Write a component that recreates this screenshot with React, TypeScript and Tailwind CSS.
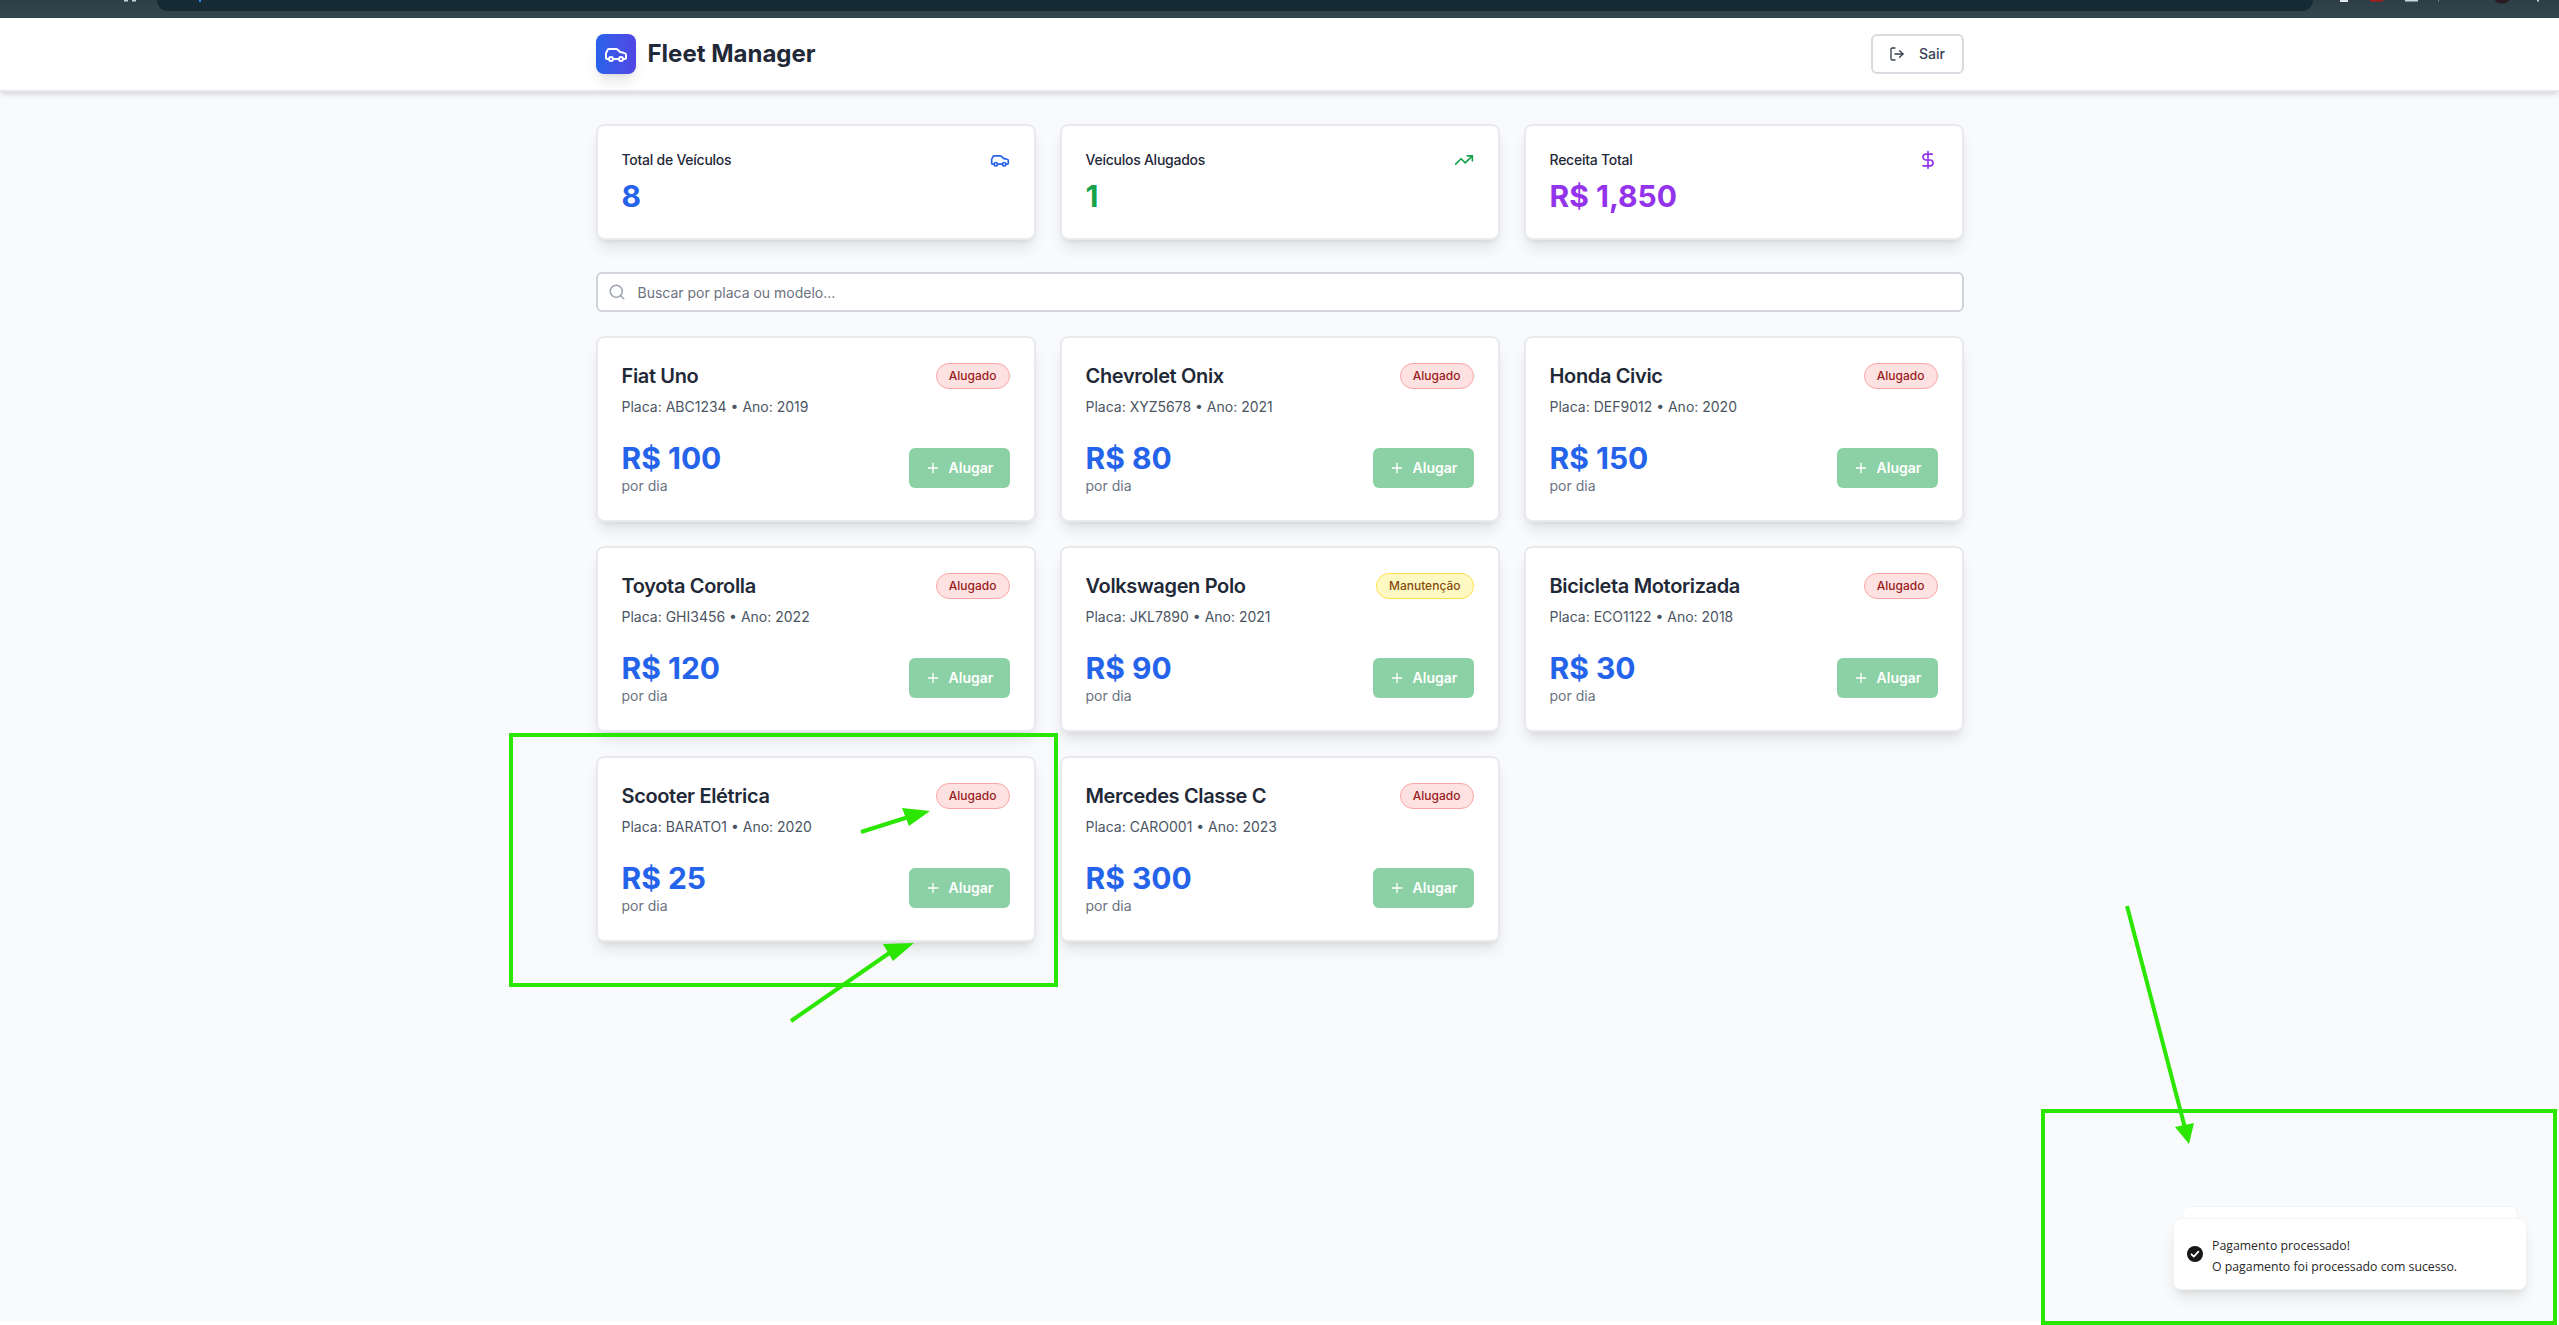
import React from 'react'
import { Car, TrendingUp, DollarSign, LogOut, Search, Plus } from 'lucide-react'

interface Vehicle {
	name: string
	plate: string
	year: number
	price: number
	status: string
}

const vehicles: Vehicle[] = [
	{ name: 'Fiat Uno', plate: 'ABC1234', year: 2019, price: 100, status: 'Alugado' },
	{ name: 'Chevrolet Onix', plate: 'XYZ5678', year: 2021, price: 80, status: 'Alugado' },
	{ name: 'Honda Civic', plate: 'DEF9012', year: 2020, price: 150, status: 'Alugado' },
	{ name: 'Toyota Corolla', plate: 'GHI3456', year: 2022, price: 120, status: 'Alugado' },
	{ name: 'Volkswagen Polo', plate: 'JKL7890', year: 2021, price: 90, status: 'Manutenção' },
	{ name: 'Bicicleta Motorizada', plate: 'ECO1122', year: 2018, price: 30, status: 'Alugado' },
	{ name: 'Scooter Elétrica', plate: 'BARATO1', year: 2020, price: 25, status: 'Alugado' },
	{ name: 'Mercedes Classe C', plate: 'CARO001', year: 2023, price: 300, status: 'Alugado' },
]

const StatCard = ({ label, value, color, icon }: { label: string; value: string; color: string; icon: React.ReactNode }) => (
	<div className="h-[116px] rounded-lg border-2 border-[#e9eaee] bg-white px-6 pt-6 shadow-lg">
		<div className="flex items-center justify-between">
			<span className="text-sm font-medium tracking-[-0.25px] text-[#1f2937]">{label}</span>
			{icon}
		</div>
		<div className={`mt-2 text-3xl font-bold ${color}`}>{value}</div>
	</div>
)

const VehicleCard = ({ vehicle }: { vehicle: Vehicle }) => (
	<div className="rounded-lg border-2 border-[#e9eaee] bg-white p-6 shadow-lg">
		<div className="flex items-center justify-between">
			<h3 className="text-xl font-semibold tracking-[-0.35px] text-[#1f2937]">{vehicle.name}</h3>
			{vehicle.status === 'Alugado' ? (
				<span className="rounded-full border border-[#fca5a5] bg-[#fee2e2] px-3 py-1 text-xs font-medium text-[#991b1b]">{vehicle.status}</span>
			) : (
				<span className="rounded-full border border-[#fde047] bg-[#fef9c3] px-3 py-1 text-xs font-medium text-[#854d0e]">{vehicle.status}</span>
			)}
		</div>
		<p className="mt-[7px] text-sm text-[#4b5563]">
			Placa: {vehicle.plate} • Ano: {vehicle.year}
		</p>
		<div className="mt-[23px] flex items-center justify-between">
			<div>
				<div className="text-3xl font-bold text-[#2563eb]">R$ {vehicle.price}</div>
				<div className="text-sm text-[#6b7280]">por dia</div>
			</div>
			<button className="flex h-10 w-[101px] items-center justify-center gap-2 rounded-md bg-[#8bd1a5] text-sm font-semibold text-white">
				<Plus className="h-4 w-4" />
				Alugar
			</button>
		</div>
	</div>
)

export default function App() {
	return (
		<div className="relative h-[1325px] overflow-hidden bg-white font-['Inter',sans-serif]">
			{/* bottom edge of the browser toolbar */}
			<div className="relative h-[18px] bg-gradient-to-b from-[#2c3f47] to-[#33474f] pl-[157px] pr-[246px]">
				<div className="h-[11px] rounded-b-[14px] bg-[#152b33]" />
				<svg className="absolute left-0 top-0" width="2559" height="4">
					<rect x="124" width="4" height="1.5" fill="#c8d2d6" />
					<rect x="132" width="4" height="1.5" fill="#c8d2d6" />
					<rect x="199" width="2" height="2" fill="#3b82f6" />
					<rect x="2340" width="8" height="2" fill="#dfe3ea" />
					<rect x="2370" width="13" height="1.5" fill="#a81c1c" />
					<rect x="2405" width="13" height="1.5" fill="#c8d8dc" />
					<rect x="2438" width="1" height="2" fill="#6b7f86" />
					<ellipse cx="2502" cy="0" rx="7" ry="3.5" fill="#2a1a22" />
					<rect x="2537" width="2" height="1.5" fill="#c8d2d6" />
				</svg>
			</div>
			<div className="h-[1303px] bg-[#f9fafb]">
				<header className="h-[74px] border-b-2 border-[#e5e7eb] bg-white shadow-md">
					<div className="mx-auto flex h-full w-[1368px] items-center justify-between">
						<div className="flex items-center gap-3">
							<div className="flex h-10 w-10 items-center justify-center rounded-lg bg-gradient-to-r from-[#2563eb] to-[#4f46e5] shadow-lg">
								<Car className="h-6 w-6 text-white" />
							</div>
							<h1 className="text-2xl font-bold text-[#1f2937]">Fleet Manager</h1>
						</div>
						<button className="flex h-10 w-[93px] items-center justify-center gap-[14px] rounded-md border-2 border-[#d9dbe0] bg-white text-sm font-medium text-[#374151]">
							<LogOut className="h-4 w-4" />
							Sair
						</button>
					</div>
				</header>
				<main className="mx-auto w-[1368px] pt-8">
					<div className="grid grid-cols-3 gap-6">
						<StatCard label="Total de Veículos" value="8" color="text-[#2563eb]" icon={<Car className="h-5 w-5 text-[#2563eb]" />} />
						<StatCard label="Veículos Alugados" value="1" color="text-[#16a34a]" icon={<TrendingUp className="h-5 w-5 text-[#16a34a]" />} />
						<StatCard label="Receita Total" value="R$ 1,850" color="text-[#9333ea]" icon={<DollarSign className="h-5 w-5 text-[#9333ea]" />} />
					</div>
					<div className="relative mt-8">
						<Search className="absolute left-3 top-[11px] h-[18px] w-[18px] text-[#9ca3af]" />
						<input
							className="h-10 w-full rounded-md border-2 border-[#d1d5db] bg-white pl-10 pr-3 text-sm placeholder:text-[#6b7280]"
							placeholder="Buscar por placa ou modelo..."
						/>
					</div>
					<div className="mt-6 grid grid-cols-3 gap-6">
						{vehicles.map((vehicle) => (
							<VehicleCard key={vehicle.plate} vehicle={vehicle} />
						))}
					</div>
				</main>
			</div>

			{/* toast stack */}
			<div className="absolute left-[2182px] top-[1206px] h-[30px] w-[336px] rounded-lg border border-gray-100 bg-white" />
			<div className="absolute left-[2173px] top-[1218px] flex h-[72px] w-[354px] items-center gap-[7px] rounded-lg border border-gray-100 bg-white pl-[11px] font-['Open_Sans',sans-serif] text-[12.3px] leading-[21px] text-[#282828] shadow-lg">
				<svg className="h-5 w-5 shrink-0" viewBox="0 0 20 20" fill="#171717">
					<circle cx="10" cy="10" r="8" />
					<path d="M6.5 10.3l2.3 2.3 4.6-5" fill="none" stroke="#fff" strokeWidth="1.8" strokeLinecap="round" strokeLinejoin="round" />
				</svg>
				<div className="pt-1">
					<div className="font-medium">Pagamento processado!</div>
					<div>O pagamento foi processado com sucesso.</div>
				</div>
			</div>

			{/* green annotations on top of the screenshot */}
			<svg className="absolute left-0 top-0" width="2559" height="1325" fill="none">
				<rect x="511" y="735" width="545" height="250" stroke="#2ae600" strokeWidth="4" />
				<rect x="2043" y="1111" width="512" height="212" stroke="#2ae600" strokeWidth="4" />
				<path d="M861 832L918 814" stroke="#2ae600" strokeWidth="4" />
				<path d="M930 811L909 826L902 808Z" fill="#2ae600" />
				<path d="M791 1021L898 947" stroke="#2ae600" strokeWidth="4" />
				<path d="M914 943L893 961L883 944Z" fill="#2ae600" />
				<path d="M2127 906L2185 1128" stroke="#2ae600" strokeWidth="4" />
				<path d="M2189 1144L2175 1127L2194 1123Z" fill="#2ae600" />
			</svg>
		</div>
	)
}
